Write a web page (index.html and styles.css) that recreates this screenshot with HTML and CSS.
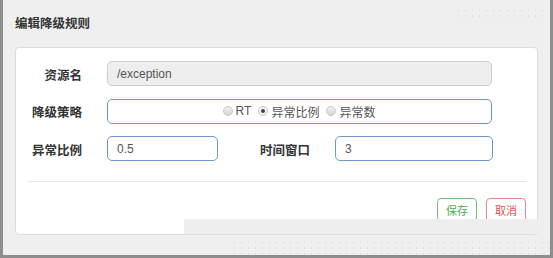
FILE: index.html
```html
<!DOCTYPE html>
<html lang="zh-CN">
  <head>
    <meta charset="UTF-8" />
    <meta name="viewport" content="width=device-width, initial-scale=1.0" />
    <title>编辑降级规则</title>
    <link rel="stylesheet" href="styles.css">
  </head>
  <body>
    <div class="window">
      <div class="modal-header">
        <h4 class="modal-title">编辑降级规则</h4>
        <div class="noise noise-top"></div>
      </div>

      <div class="modal-body">
        <form class="rule-form">
          <div class="form-row">
            <label class="form-label">资源名</label>
            <input type="text" class="field field-full" value="/exception" disabled />
          </div>

          <!-- 降级策略 -->
          <div class="form-row">
            <label class="form-label">降级策略</label>
            <div class="field field-full field-active radio-group">
              <label class="radio"><span class="radio-dot"></span>RT</label>
              <label class="radio"><span class="radio-dot checked"></span>异常比例</label>
              <label class="radio"><span class="radio-dot"></span>异常数</label>
            </div>
          </div>

          <div class="form-row">
            <label class="form-label">异常比例</label>
            <input type="text" class="field field-active field-short" value="0.5" />
            <label class="form-label label-second">时间窗口</label>
            <input type="text" class="field field-active field-mid" value="3" />
          </div>
        </form>

        <hr class="divider" />

        <div class="actions">
          <button type="button" class="btn btn-save">保存</button>
          <button type="button" class="btn btn-cancel">取消</button>
        </div>

        <div class="footer-patch"></div>
      </div>

      <div class="noise noise-bottom"></div>
    </div>
  </body>
</html>
```

FILE: styles.css
```css
* {
  box-sizing: border-box;
}
body {
  margin: 0;
  font-family: "Liberation Sans", "Noto Sans CJK SC", sans-serif;
  background: #efefef;
}
.window {
  position: relative;
  width: 553px;
  height: 258px;
  background: #efefef;
  border-left: 3px solid #8e8e8e;
  border-right: 3px solid #8e8e8e;
  border-bottom: 3px solid #8e8e8e;
  overflow: hidden;
}
.modal-header {
  height: 47px;
  padding-left: 12px;
  display: flex;
  align-items: center;
}
.modal-title {
  margin: 0;
  font-size: 12.5px;
  font-weight: bold;
  color: #333;
  padding-bottom: 2px;
}
.modal-body {
  position: relative;
  margin-left: 12px;
  width: 523px;
  height: 188px;
  background: #fff;
  border: 1px solid #dcdcdc;
  border-radius: 4px;
  padding: 13px 11px 0 12px;
}
.rule-form {
  display: flex;
  flex-direction: column;
  gap: 12.5px;
}
.form-row {
  display: flex;
  align-items: center;
  height: 25px;
}
.form-label {
  width: 54px;
  margin-right: 25px;
  text-align: right;
  font-size: 12.5px;
  font-weight: bold;
  color: #333;
  padding-top: 1px;
}
.label-second {
  margin-left: 38px;
}
.field {
  height: 25px;
  border: 1px solid #ccc;
  border-radius: 5px;
  padding: 0 9px;
  font-family: "Liberation Sans", "Noto Sans CJK SC", sans-serif;
  font-size: 12px;
  color: #555;
  background: #fff;
}
.field:disabled {
  background: #eee;
  color: #555;
}
.field-full {
  width: 385px;
}
.field-short {
  width: 111px;
}
.field-mid {
  width: 158px;
}
.field-active {
  border-color: #6b9ad0;
}
.radio-group {
  display: flex;
  align-items: center;
  justify-content: center;
  gap: 7px;
  padding-right: 10px;
}
.radio {
  display: flex;
  align-items: center;
  font-size: 12px;
  color: #555;
}
.radio-dot {
  width: 10px;
  height: 10px;
  border-radius: 50%;
  margin-right: 3px;
  border: 1px solid #c8c8c8;
  background: linear-gradient(#f2f2f2, #d6d6d6);
  position: relative;
}
.radio-dot.checked {
  background: #f4f4f4;
}
.radio-dot.checked::after {
  content: "";
  position: absolute;
  left: 2px;
  top: 2px;
  width: 4px;
  height: 4px;
  border-radius: 50%;
  background: #444;
}
.divider {
  border: none;
  border-top: 1px solid #e6e6e6;
  margin: 20px 0 0 0;
  width: 499px;
}
.actions {
  display: flex;
  justify-content: flex-end;
  gap: 9px;
  margin-top: 16px;
}
.btn {
  width: 40px;
  height: 24px;
  background: #fff;
  border-radius: 4px;
  font-family: "Noto Sans CJK SC", sans-serif;
  font-size: 11px;
  padding: 0;
  cursor: pointer;
}
.btn-save {
  border: 1px solid #6fbf76;
  color: #4cae4c;
}
.btn-cancel {
  border: 1px solid #e28a8f;
  color: #d9534f;
}
.footer-patch {
  position: absolute;
  right: -1px;
  bottom: 0;
  width: 354px;
  height: 15px;
  background: #eeeeee;
  border-bottom-right-radius: 4px;
}
.noise {
  position: absolute;
  background-image: radial-gradient(circle, rgba(225, 110, 110, 0.5) 0.7px, transparent 1.1px);
  background-size: 7px 6px;
  opacity: 0.35;
}
.noise-top {
  top: 7px;
  left: 452px;
  width: 92px;
  height: 14px;
}
.noise-bottom {
  top: 239px;
  left: 228px;
  width: 322px;
  height: 16px;
}
```
